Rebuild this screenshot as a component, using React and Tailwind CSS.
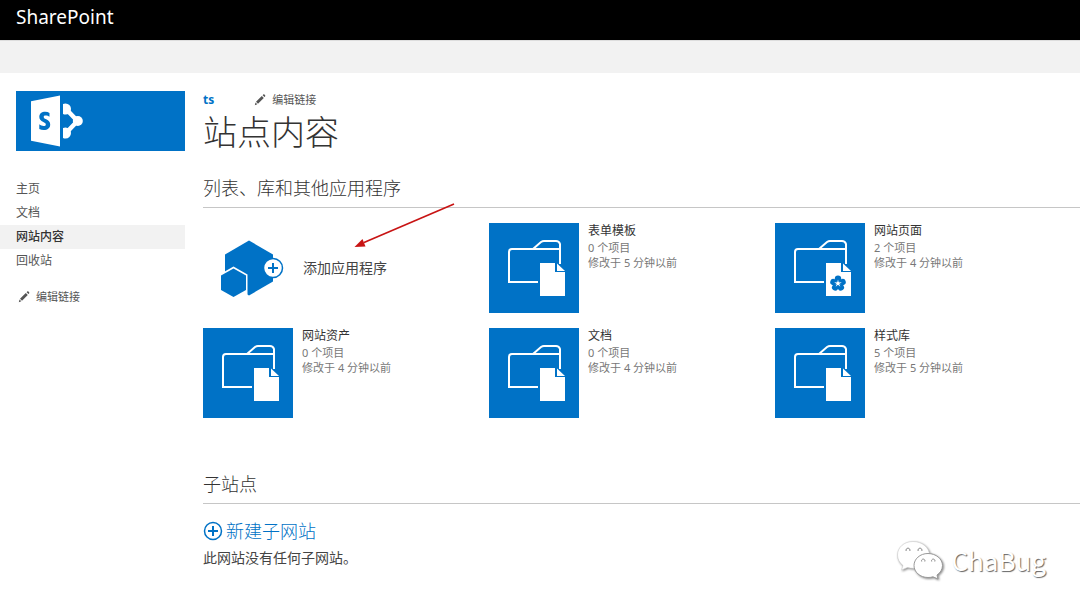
import React from 'react';

const CJK = "font-['Noto_Sans','Noto_Sans_CJK_SC',sans-serif]";

function Pencil() {
  return (
    <svg className="size-3 shrink-0" viewBox="0 0 12 12" fill="#555" aria-hidden="true">
      <path d="M7.800 1.900l2 2-5.800 5.800-2-2zM8.600 1.200l.7-.7c.4-.3.8-.2 1.100.1l.7.700c.3.3.3.7 0 1.100l-.6.700zM1.500 8.500l1.800 1.800L.8 11.200z" />
    </svg>
  );
}

function SharePointLogo() {
  return (
    <svg className="h-[60px] w-20" viewBox="0 0 80 60" aria-hidden="true">
      <path d="M15 10.300L44 4.500v51L15 49.700z" fill="#fff" />
      <path
        d="M33.500 22c-1.200-.8-2.600-1.200-4.200-1.200-3.600 0-6 1.900-6 5 0 2.400 1.300 3.800 4 5.200 2 1 2.500 1.500 2.500 2.400 0 1-.8 1.600-2.200 1.600-1.500 0-3-.6-4.300-1.700v4.700c1.200.7 2.700 1.100 4.400 1.100 4 0 6.500-1.900 6.500-5.500 0-2.500-1.300-3.900-4-5.300-2-1-2.500-1.500-2.500-2.400s.7-1.400 2-1.400c1.400 0 2.700.5 3.800 1.300z"
        fill="#0072c6"
      />
      <clipPath id="half">
        <path d="M47 0h33v60H47z" />
      </clipPath>
      <g clipPath="url(#half)" fill="#fff">
        <path d="M50 18l11.500 12L50 42" fill="none" stroke="#fff" strokeWidth="4.500" />
        <circle cx="49.500" cy="18" r="5.500" />
        <circle cx="49.500" cy="42" r="5.500" />
        <circle cx="61.800" cy="30" r="5" />
      </g>
    </svg>
  );
}

function FolderTile({ flower }) {
  return (
    <svg className="size-[90px] shrink-0 bg-[#0072c6]" viewBox="0 0 90 90" aria-hidden="true">
      <g fill="none" stroke="#fff" strokeWidth="2">
        <path d="M49 59H20V29q0-3 3-3h21l8-7q1.500-1 3-1h12q3 0 4 3v20M44 26h26" />
      </g>
      <path d="M51 40h15v9h10v24H51z" fill="#fff" />
      <path d="M68 40.500l8 7.500h-8z" fill="#fff" />
      {flower && (
        <g>
          {[0, 72, 144, 216, 288].map((a) => (
            <ellipse key={a} transform={`rotate(${a} 63 60.500)`} cx="63" cy="55.500" rx="3.200" ry="3" fill="#0072c6" />
          ))}
          <circle cx="63" cy="60.500" r="2.800" fill="#0072c6" />
          {[0, 72, 144, 216, 288].map((a) => (
            <path key={a} transform={`rotate(${a} 63 60.500)`} d="M62 60.500l1-4 1 4z" fill="#fff" />
          ))}
          <circle cx="63" cy="60.500" r="1.300" fill="#fff" />
        </g>
      )}
    </svg>
  );
}

function AddAppIcon() {
  return (
    <svg className="size-[90px] shrink-0" viewBox="0 0 90 90" aria-hidden="true">
      <path d="M46 17.500l24 14v27l-24 14-24-14v-27z" fill="#0072c6" />
      <path d="M30.500 43.500L44.500 51.500v22H16.500V51.500z" fill="#fff" />
      <path d="M30.500 45.500L43 52.500v14.500l-12.500 7L18 67V52.500z" fill="#0072c6" />
      <circle cx="70" cy="45" r="9.500" fill="#fff" stroke="#0072c6" strokeWidth="1.500" />
      <path d="M70 40v10M65 45h10" stroke="#0072c6" strokeWidth="2" />
    </svg>
  );
}

const apps = [
  { name: '表单模板', count: 0, minutes: 5 },
  { name: '网站页面', count: 2, minutes: 4, flower: true },
  { name: '网站资产', count: 0, minutes: 4 },
  { name: '文档', count: 0, minutes: 4 },
  { name: '样式库', count: 5, minutes: 5 },
];

const links = ['主页', '文档', '网站内容', '回收站'];

function SectionTitle({ children }) {
  return (
    <h2 className="border-b border-[#c6c6c6] pb-[5px] text-lg leading-[27px] font-light text-[#333]">{children}</h2>
  );
}

export default function App() {
  return (
    <div className={`${CJK} relative min-h-screen overflow-x-hidden bg-white text-[#444]`}>
      <header className="h-10 bg-black px-4 text-[19px] leading-[34px] text-white">SharePoint</header>
      <div className="h-[33px] border-t border-[#ddd] bg-[#f2f2f2]" />

      <div className="flex pt-[18px]">
        <aside className="w-[185px] shrink-0">
          <a href="#home" aria-label="SharePoint" className="ml-4 block bg-[#0072c6]">
            <SharePointLogo />
          </a>
          <nav className="mt-[26px] text-xs leading-6 text-[#555]">
            {links.map((l) => (
              <a
                key={l}
                href="#nav"
                className={l === '网站内容' ? 'block bg-[#f2f2f2] pl-4 font-medium text-[#333]' : 'block pl-4'}
              >
                {l}
              </a>
            ))}
            <button className="mt-3 flex items-center gap-[6px] pl-[18px] text-[11px]">
              <Pencil />
              编辑链接
            </button>
          </nav>
        </aside>

        <main className="ml-[18px] min-w-0 flex-1">
          <div className="flex h-[18px] items-center gap-10 text-[11px] text-[#555]">
            <a href="#ts" className="text-xs font-bold text-[#0072c6]">ts</a>
            <button className="flex items-center gap-[6px]">
              <Pencil />
              编辑链接
            </button>
          </div>
          <h1 className="text-[34px] leading-[46px] font-light text-[#333]">站点内容</h1>

          <section className="mt-5">
            <SectionTitle>列表、库和其他应用程序</SectionTitle>
            <div className="mt-[15px] grid grid-cols-[repeat(auto-fill,286px)] gap-y-[15px]">
              <a href="#add" className="flex items-center gap-[10px] text-sm">
                <AddAppIcon />
                添加应用程序
              </a>
              {apps.map((a) => (
                <a key={a.name} href="#app" className="flex gap-[9px]">
                  <FolderTile flower={a.flower} />
                  <div className="text-[11px] leading-[15px] text-[#777]">
                    <div className="mb-px text-xs leading-4 text-[#333]">{a.name}</div>
                    <div>{a.count} 个项目</div>
                    <div>修改于 {a.minutes} 分钟以前</div>
                  </div>
                </a>
              ))}
            </div>
          </section>

          <section className="mt-[53px]">
            <SectionTitle>子站点</SectionTitle>
            <a href="#new" className="mt-[13px] flex items-center gap-[3px] text-lg leading-7 font-light text-[#0072c6]">
              <svg className="size-5" viewBox="0 0 20 20" fill="none" stroke="#0072c6" aria-hidden="true">
                <circle cx="10" cy="10" r="8.500" strokeWidth="1.500" />
                <path d="M10 5v10M5 10h10" strokeWidth="2" />
              </svg>
              新建子网站
            </a>
            <p className="text-sm leading-[26px]">此网站没有任何子网站。</p>
          </section>
        </main>
      </div>

      <svg className="absolute top-[200px] left-[350px] h-[50px] w-[110px]" viewBox="0 0 110 50" aria-hidden="true">
        <path d="M104 4L14 42.500" stroke="#c81414" strokeWidth="1.700" />
        <path d="M4.500 47L12.500 39l3 7.500z" fill="#c81414" />
      </svg>

      <div className="absolute right-[34px] bottom-[31px] flex items-center gap-[7px]">
        <svg
          className="h-10 w-12 drop-shadow-[1px_1px_1px_#888]"
          viewBox="0 0 48 40"
          fill="#fff"
          stroke="#ccc"
          strokeWidth="0.600"
          aria-hidden="true"
        >
          <path d="M17 1.500C8 1.500 1.500 7.500 1.500 15c0 4 2 8 5.500 10.500L5.500 30l6-2.500c2 .6 4 .8 6 .8 9 0 16-6 16-13.300S26 1.500 17 1.500z" />
          <path
            d="M32 13.500c-8 0-14 5.500-14 12s6 12 14 12c2 0 3.500-.2 5-.7l5 2.200-1-4c3.300-2.200 5.500-5.600 5.500-9.500 0-6.500-6.500-12-14.500-12z"
            stroke="#999"
            strokeWidth="1"
          />
          <g fill="none" stroke="#888" strokeWidth="1">
            <path d="M10.200 11a2 2 0 1 1 3.600 0M22.200 11a2 2 0 1 1 3.600 0M25.700 21.500a1.700 1.700 0 1 1 3.100 0M35.700 21.500a1.700 1.700 0 1 1 3.100 0" />
          </g>
        </svg>
        <span className="font-['Noto_Sans_CJK_SC',sans-serif] text-[26px] leading-10 text-white [text-shadow:1px_1px_1px_#666]">
          ChaBug
        </span>
      </div>
    </div>
  );
}
